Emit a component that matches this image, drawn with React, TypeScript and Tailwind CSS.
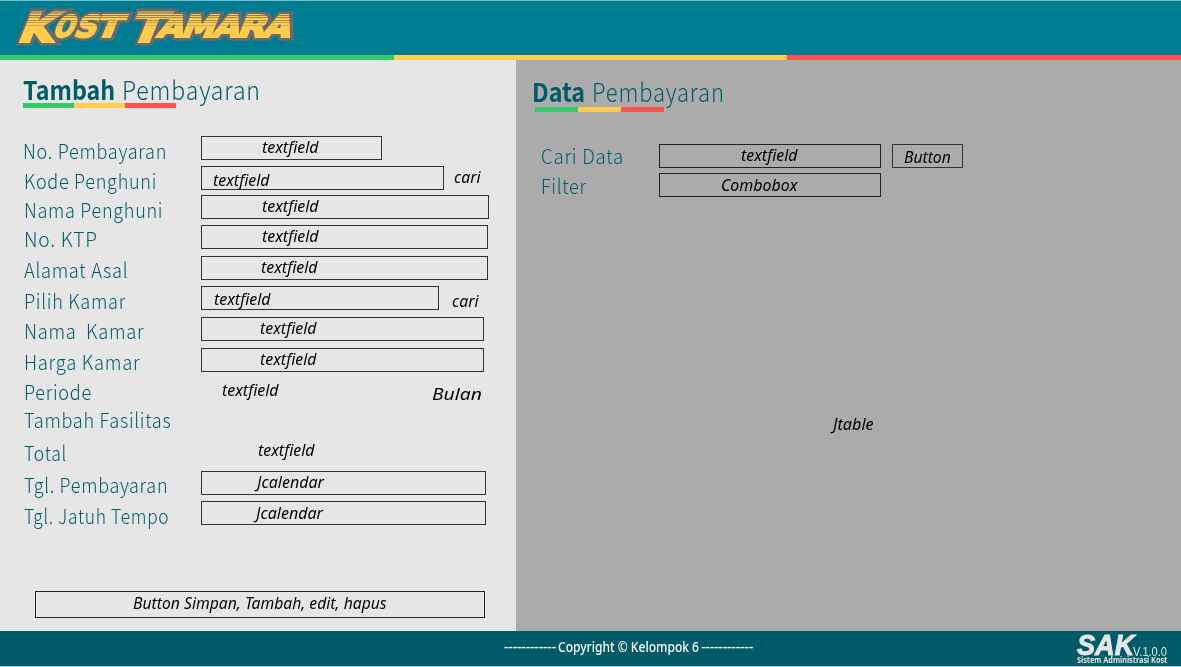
import { useLayoutEffect, useRef, useState } from "react";

/* Single line of text set to an exact measure. */
function Fit({ w, className = "", children }: { w: number; className?: string; children: string }) {
  const ref = useRef<HTMLSpanElement>(null);
  const [scale, setScale] = useState(1);
  useLayoutEffect(() => {
    if (ref.current) setScale(w / ref.current.offsetWidth);
  }, [w]);
  return (
    <span className={`block shrink-0 ${className}`} style={{ width: w }}>
      <span ref={ref} className="inline-block origin-left whitespace-pre align-top" style={{ transform: `scaleX(${scale})` }}>
        {children}
      </span>
    </span>
  );
}

const LABEL = "font-['Noto_Sans_CJK_JP','Noto_Sans',sans-serif] font-light text-[20.5px] leading-[20px] tracking-[0.8px] text-[#005b69]";
const HINT = "font-['Noto_Sans',sans-serif] italic text-[17px] leading-[16px] text-black";

type Row = {
  label: string;
  w: number;
  h: string;
  pad: string;
  box: string;
  hint?: string;
  hw?: number;
  hintPos?: string;
  side?: string;
  sw?: number;
  sidePos?: string;
};

const rows: Row[] = [
  { label: "No. Pembayaran", w: 144, h: "h-[30px]", pad: "pt-[4px] pl-[23px]", box: "w-[181px] border", hint: "textfield", hw: 57, hintPos: "ml-[60px] mt-[2px]" },
  { label: "Kode Penghuni", w: 133, h: "h-[30px]", pad: "pt-[4px] pl-[24px]", box: "w-[243px] border", hint: "textfield", hw: 57, hintPos: "ml-[11px] mt-[5px]", side: "cari", sw: 27, sidePos: "ml-[10px] mt-[3px]" },
  { label: "Nama Penghuni", w: 139, h: "h-[29px]", pad: "pt-[3px] pl-[24px]", box: "w-[288px] border -mt-px", hint: "textfield", hw: 57, hintPos: "ml-[60px] mt-[2px]" },
  { label: "No. KTP", w: 74, h: "h-[31px]", pad: "pt-[3px] pl-[24px]", box: "w-[287px] border", hint: "textfield", hw: 57, hintPos: "ml-[60px] mt-[2px]" },
  { label: "Alamat Asal", w: 104, h: "h-[31px]", pad: "pt-[3px] pl-[24px]", box: "w-[287px] border", hint: "textfield", hw: 57, hintPos: "ml-[59px] mt-[2px]" },
  { label: "Pilih Kamar", w: 102, h: "h-[30px]", pad: "pt-[3px] pl-[24px]", box: "w-[238px] border -mt-px", hint: "textfield", hw: 57, hintPos: "ml-[12px] mt-[4px]", side: "cari", sw: 27, sidePos: "ml-[13px] mt-[6px]" },
  { label: "Nama  Kamar", w: 120, h: "h-[31px]", pad: "pt-[3px] pl-[24px]", box: "w-[283px] border", hint: "textfield", hw: 57, hintPos: "ml-[58px] mt-[2px]" },
  { label: "Harga Kamar", w: 116, h: "h-[30px]", pad: "pt-[3px] pl-[24px]", box: "w-[283px] border", hint: "textfield", hw: 57, hintPos: "ml-[58px] mt-[2px]" },
  { label: "Periode", w: 68, h: "h-[28px]", pad: "pt-[3px] pl-[24px]", box: "w-[230px]", hint: "textfield", hw: 57, hintPos: "ml-[21px] mt-[4px]", side: "Bulan", sw: 50, sidePos: "ml-[1px] mt-[8px]" },
  { label: "Tambah Fasilitas", w: 147, h: "h-[33px]", pad: "pt-[3px] pl-[24px]", box: "w-[230px]" },
  { label: "Total", w: 43, h: "h-[32px]", pad: "pt-[3px] pl-[24px]", box: "w-[285px]", hint: "textfield", hw: 57, hintPos: "ml-[57px] mt-[3px]" },
  { label: "Tgl. Pembayaran", w: 144, h: "h-[30px]", pad: "pt-[3px] pl-[24px]", box: "w-[285px] border", hint: "Jcalendar", hw: 67, hintPos: "ml-[55px] mt-[2px]" },
  { label: "Tgl. Jatuh Tempo", w: 145, h: "h-[30px]", pad: "pt-[4px] pl-[24px]", box: "w-[285px] border", hint: "Jcalendar", hw: 67, hintPos: "ml-[54px] mt-[3px]" },
];

function Underline({ className }: { className: string }) {
  return (
    <div className={`flex ${className}`}>
      <div className="flex-1 bg-[#37c968]" />
      <div className="flex-1 bg-[#ffcc4d]" />
      <div className="flex-1 bg-[#ff5353]" />
    </div>
  );
}

const glyphs = [
  { c: "K", x: 16, y: 42, s: 41, w: 36 },
  { c: "O", x: 52, y: 36.5, s: 30, w: 20 },
  { c: "S", x: 73, y: 36.5, s: 30, w: 22 },
  { c: "T", x: 94, y: 36.5, s: 30, w: 25 },
  { c: "T", x: 127, y: 42, s: 41, w: 34 },
  { c: "A", x: 156, y: 36.5, s: 30, w: 26 },
  { c: "M", x: 180, y: 36.5, s: 30, w: 33 },
  { c: "A", x: 211, y: 36.5, s: 30, w: 27 },
  { c: "R", x: 236, y: 36.5, s: 30, w: 28 },
  { c: "A", x: 261, y: 36.5, s: 30, w: 28 },
];

function Wordmark() {
  const layer = (fill: string, strokeWidth: number) =>
    glyphs.map((g, i) => (
      <text
        key={i}
        transform={`translate(${g.x} ${g.y}) skewX(-22)`}
        fontFamily="DejaVu Sans, sans-serif"
        fontWeight="700"
        fontSize={g.s}
        textLength={g.w}
        lengthAdjust="spacingAndGlyphs"
        fill={fill}
        stroke={fill}
        strokeWidth={strokeWidth}
        strokeMiterlimit={3}
      >
        {g.c}
      </text>
    ));
  return (
    <svg width="310" height="54" viewBox="0 0 310 54" className="block">
      <defs>
        <mask id="letters" maskUnits="userSpaceOnUse" x="0" y="0" width="310" height="54">
          {layer("#fff", 2)}
        </mask>
      </defs>
      {layer("#6b6a68", 7)}
      <g mask="url(#letters)">
        <rect width="310" height="54" fill="#ffcc4d" />
        <g fill="#6b6a68">
          <rect y="10" width="310" height="4" opacity=".5" />
          <rect y="15" width="310" height="1" opacity=".8" />
          <rect y="17" width="310" height="1" opacity=".7" />
          <rect y="20" width="310" height="1" opacity=".6" />
          <rect y="22" width="310" height="1" opacity=".45" />
          <rect y="25" width="310" height="1" opacity=".3" />
        </g>
      </g>
    </svg>
  );
}

const COPY = "font-['Noto_Sans',sans-serif] text-[13.5px] font-medium leading-[14px] text-white";

export default function App() {
  return (
    <div className="flex h-[667px] w-[1181px] flex-col overflow-hidden bg-[#e6e6e6]">
      <header className="h-[55px] border-t border-[#80bdc9] bg-[#007c92]">
        <div className="-mt-px">
          <Wordmark />
        </div>
      </header>
      <div className="flex h-[5px]">
        <div className="w-[394px] bg-[#37c968]" />
        <div className="w-[393px] bg-[#ffcc4d]" />
        <div className="flex-1 bg-[#ff5353]" />
      </div>

      <main className="flex h-[571px]">
        <section className="w-[516px] bg-[#e6e6e6]">
          <div className="flex h-[43px] pl-[23px] pt-[16px] font-['Noto_Sans_CJK_JP','Noto_Sans',sans-serif] text-[26px] leading-[25px] text-[#005b69]">
            <Fit w={92} className="font-bold">Tambah</Fit>
            <Fit w={139} className="ml-[7px] font-light tracking-[1px]">Pembayaran</Fit>
          </div>
          <Underline className="ml-[23px] h-[5px] w-[153px]" />
          <div className="pt-[28px]">
            {rows.map((r) => (
              <div key={r.label} className={`flex ${r.h}`}>
                <div className={`w-[201px] shrink-0 ${r.pad}`}>
                  <Fit w={r.w} className={LABEL}>{r.label}</Fit>
                </div>
                <div className={`h-[24px] shrink-0 border-[#333] ${r.box}`}>
                  {r.hint && <Fit w={r.hw!} className={`${HINT} ${r.hintPos}`}>{r.hint}</Fit>}
                </div>
                {r.side && <Fit w={r.sw!} className={`${HINT} ${r.sidePos}`}>{r.side}</Fit>}
              </div>
            ))}
          </div>
          <div className="ml-[35px] mt-[60px] flex h-[27px] w-[450px] border border-[#222] pl-[97px] pt-[3px]">
            <Fit w={254} className={HINT}>Button Simpan, Tambah, edit, hapus</Fit>
          </div>
        </section>

        <section className="flex-1 bg-[#ababab]">
          <div className="flex h-[45px] pl-[16px] pt-[18px] font-['Noto_Sans_CJK_JP','Noto_Sans',sans-serif] text-[26px] leading-[25px] text-[#005b69]">
            <Fit w={53} className="font-bold">Data</Fit>
            <Fit w={133} className="ml-[7px] font-light tracking-[1px]">Pembayaran</Fit>
          </div>
          <Underline className="ml-[19px] mt-[2px] h-[5px] w-[129px]" />
          <div className="mt-[32px] flex h-[29px] pl-[25px]">
            <div className="w-[118px] pt-px">
              <Fit w={83} className={LABEL}>Cari Data</Fit>
            </div>
            <div className="h-[24px] w-[222px] border border-[#222]">
              <Fit w={57} className={`${HINT} ml-[81px] mt-[2px]`}>textfield</Fit>
            </div>
            <div className="ml-[11px] h-[24px] w-[71px] border border-[#333]">
              <Fit w={47} className={`${HINT} ml-[11px] mt-[4px]`}>Button</Fit>
            </div>
          </div>
          <div className="flex h-[29px] pl-[25px]">
            <div className="w-[118px] pt-[2px]">
              <Fit w={46} className={LABEL}>Filter</Fit>
            </div>
            <div className="h-[24px] w-[222px] border border-[#222]">
              <Fit w={76} className={`${HINT} ml-[61px] mt-[3px]`}>Combobox</Fit>
            </div>
          </div>
          <div className="ml-[317px] mt-[214px]">
            <Fit w={41} className={HINT}>Jtable</Fit>
          </div>
        </section>
      </main>

      <footer className="flex h-[36px] border-b border-[#b3cdd2] bg-[#005b69]">
        <div className="flex w-[1077px] pl-[504px] pt-[9px]">
          <Fit w={52} className={COPY}>------------</Fit>
          <Fit w={141} className={`${COPY} ml-[2px]`}>Copyright © Kelompok 6</Fit>
          <Fit w={52} className={`${COPY} ml-[2px]`}>------------</Fit>
        </div>
        <div className="text-[#e6e6e6]">
          <div className="flex h-[25px]">
            <Fit w={57} className="font-['Liberation_Sans',sans-serif] text-[29px] font-bold italic leading-[28px] [-webkit-text-stroke:1px_#e6e6e6]">SAK</Fit>
            <Fit w={34} className="-ml-px mt-[16px] font-['Liberation_Sans',sans-serif] text-[12px] leading-[10px]">V.1.0.0</Fit>
          </div>
          <Fit w={90} className="font-['Noto_Sans',sans-serif] text-[8px] font-bold leading-[8px]">Sistem Administrasi Kost</Fit>
        </div>
      </footer>
    </div>
  );
}
